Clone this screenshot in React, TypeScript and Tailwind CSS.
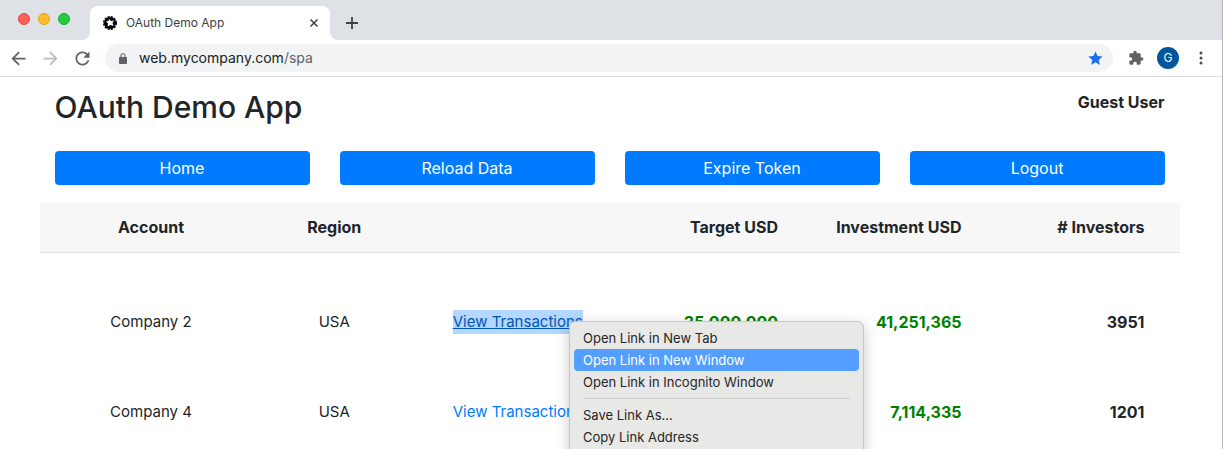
import type { ReactNode } from 'react';

const ARROW_BACK = 'M20 11H7.83l5.59-5.59L12 4l-8 8 8 8 1.41-1.41L7.83 13H20v-2z';
const ARROW_FORWARD = 'M12 4l-1.41 1.41L16.17 11H4v2h12.17l-5.58 5.59L12 20l8-8z';
const RELOAD =
  'M17.65 6.35C16.2 4.9 14.21 4 12 4c-4.42 0-7.99 3.58-7.99 8s3.57 8 7.99 8c3.73 0 6.84-2.55 7.73-6h-2.08c-.82 2.33-3.04 4-5.65 4-3.31 0-6-2.69-6-6s2.69-6 6-6c1.66 0 3.14.69 4.22 1.78L13 11h7V4l-2.35 2.35z';
const STAR = 'M12 17.27L18.18 21l-1.64-7.03L22 9.24l-7.19-.61L12 2 9.19 8.63 2 9.24l5.46 4.73L5.82 21z';
const PUZZLE =
  'M20.5 11H19V7c0-1.1-.9-2-2-2h-4V3.5C13 2.12 11.88 1 10.5 1S8 2.12 8 3.5V5H4c-1.1 0-1.99.9-1.99 2v3.8H3.5c1.49 0 2.7 1.21 2.7 2.7s-1.21 2.7-2.7 2.7H2V20c0 1.1.9 2 2 2h3.8v-1.5c0-1.49 1.21-2.7 2.7-2.7 1.49 0 2.7 1.21 2.7 2.7V22H17c1.1 0 2-.9 2-2v-4h1.5c1.38 0 2.5-1.12 2.5-2.5S21.88 11 20.5 11z';

function Icon({ d, className }: { d: string; className: string }) {
  return (
    <svg viewBox="0 0 24 24" className={className} fill="currentColor" aria-hidden="true">
      <path d={d} />
    </svg>
  );
}

function Favicon() {
  return (
    <svg viewBox="0 0 28 28" className="size-[14px] shrink-0" aria-hidden="true">
      <circle cx="14" cy="14" r="12" fill="#000" />
      <circle cx="14" cy="14" r="12.5" fill="none" stroke="#000" strokeWidth="3" strokeDasharray="4.4 2.15" />
      <path d="M12 6l4 4 6-1-3 5 2 6-6-2-6 3 1-6-4-4 5-1z" fill="#fff" />
    </svg>
  );
}

function TabStrip() {
  return (
    <div className="flex h-10 shrink-0 items-end bg-[#dee1e6] pl-[18px]">
      <div className="flex gap-2 self-center pb-[2px]">
        <button aria-label="Close window" className="size-3 rounded-full border border-[#e2463f] bg-[#ff5f57]" />
        <button aria-label="Minimise window" className="size-3 rounded-full border border-[#e1a116] bg-[#febc2e]" />
        <button aria-label="Zoom window" className="size-3 rounded-full border border-[#12ac28] bg-[#28c840]" />
      </div>
      <div className="ml-3 flex items-end">
        <svg viewBox="0 0 8 8" className="size-2 fill-white" aria-hidden="true">
          <path d="M8 0v8H0a8 8 0 0 0 8-8z" />
        </svg>
        <div className="flex h-[34px] w-60 items-center rounded-t-lg bg-white pr-[11px] pl-[13px]">
          <Favicon />
          <span className="ml-[9px] flex-1 text-xs text-[#3c4043]">OAuth Demo App</span>
          <button aria-label="Close tab">
            <svg viewBox="0 0 10 10" className="size-[10px] stroke-[#3c4043]" strokeWidth="1.5" aria-hidden="true">
              <path d="M1.500 1.500l7 7M8.500 1.500l-7 7" />
            </svg>
          </button>
        </div>
        <svg viewBox="0 0 8 8" className="size-2 fill-white" aria-hidden="true">
          <path d="M0 0v8h8a8 8 0 0 1-8-8z" />
        </svg>
      </div>
      <button aria-label="New tab" className="mb-[11px] ml-2">
        <svg viewBox="0 0 12 12" className="size-3 stroke-[#3c4043]" strokeWidth="1.800" aria-hidden="true">
          <path d="M6 0v12M0 6h12" />
        </svg>
      </button>
    </div>
  );
}

function Toolbar() {
  return (
    <div className="flex h-[37px] shrink-0 items-center border-b border-[#dadce0] bg-white pr-[13px] pl-2 text-[#5f6368]">
      <div className="flex gap-[11px]">
        <button aria-label="Back">
          <Icon d={ARROW_BACK} className="size-[21px]" />
        </button>
        <button aria-label="Forward" className="text-[#babcbe]">
          <Icon d={ARROW_FORWARD} className="size-[21px]" />
        </button>
        <button aria-label="Reload">
          <Icon d={RELOAD} className="size-[21px]" />
        </button>
      </div>
      <div className="ml-3 flex h-7 flex-1 items-center rounded-full bg-[#f1f3f4] pr-[9px] pl-[14px]">
        <svg viewBox="0 0 8 11" className="h-[11px] w-2" aria-hidden="true">
          <rect y="4" width="8" height="7" rx="0.800" fill="currentColor" />
          <path d="M2 4.500V2.700a2 2 0 0 1 4 0v1.800" fill="none" stroke="currentColor" strokeWidth="1.100" />
        </svg>
        <span className="ml-3 flex-1 text-sm text-[#202124]">
          web.mycompany.com<span className="text-[#5f6368]">/spa</span>
        </span>
        <button aria-label="Bookmark this tab" className="text-[#1a6ff0]">
          <Icon d={STAR} className="size-[17px]" />
        </button>
      </div>
      <button aria-label="Extensions" className="ml-[15px]">
        <Icon d={PUZZLE} className="size-4" />
      </button>
      <button
        aria-label="Profile"
        className="ml-[13px] flex size-[22px] items-center justify-center rounded-full bg-[#01579b] text-xs text-white"
      >
        G
      </button>
      <button aria-label="Menu" className="ml-[14px]">
        <svg viewBox="0 0 16 16" className="size-4 fill-[#4b4f54]" aria-hidden="true">
          <circle cx="8" cy="3" r="1.500" />
          <circle cx="8" cy="8" r="1.500" />
          <circle cx="8" cy="13" r="1.500" />
        </svg>
      </button>
    </div>
  );
}

function MenuItem({ active = false, children }: { active?: boolean; children: ReactNode }) {
  return (
    <button
      role="menuitem"
      className={
        active
          ? 'flex h-[22px] items-center rounded bg-[#539eff] px-[9px] text-white'
          : 'flex h-[22px] items-center rounded px-[9px] text-[#262626]'
      }
    >
      {children}
    </button>
  );
}

function ContextMenu() {
  return (
    <div
      role="menu"
      className="absolute top-[44px] left-[143px] z-10 flex w-[295px] flex-col rounded-md border border-[#c6c6c5] bg-[#e8e8e6] px-1 pt-[5px] pb-6 text-left text-[13px] whitespace-nowrap shadow-[0_4px_14px_rgba(0,0,0,0.22)]"
    >
      <MenuItem>Open Link in New Tab</MenuItem>
      <MenuItem active>Open Link in New Window</MenuItem>
      <MenuItem>Open Link in Incognito Window</MenuItem>
      <hr className="mx-[9px] my-[5px] border-[#cdcdcb]" />
      <MenuItem>Save Link As...</MenuItem>
      <MenuItem>Copy Link Address</MenuItem>
    </div>
  );
}

const accounts = [
  { name: 'Company 2', region: 'USA', target: '35,000,000', investment: '41,251,365', investors: 3951, selected: true },
  { name: 'Company 4', region: 'USA', target: '', investment: '7,114,335', investors: 1201, selected: false },
];

export default function App() {
  return (
    <div className="flex h-screen flex-col overflow-hidden border-r border-[#b5b5b8] bg-white font-['Inter',sans-serif]">
      <TabStrip />
      <Toolbar />
      <main className="min-h-0 flex-1 pr-[3px] text-base leading-6 text-[#212529]">
        <div className="mx-auto max-w-[1140px]">
          <header className="flex items-start justify-between px-[15px] pt-[11px]">
            <h1 className="text-3xl leading-[38px] font-medium">OAuth Demo App</h1>
            <span className="mt-[2px] font-bold">Guest User</span>
          </header>
          <nav className="mt-[25px] grid grid-cols-4 gap-[30px] px-[15px]">
            {['Home', 'Reload Data', 'Expire Token', 'Logout'].map((label) => (
              <button key={label} className="h-[34px] rounded bg-[#007bff] text-white">
                {label}
              </button>
            ))}
          </nav>
          <table className="mt-[18px] w-full table-fixed">
            <colgroup>
              <col className="w-[203px]" />
              <col span={4} />
              <col className="w-[203px]" />
            </colgroup>
            <thead>
              <tr className="h-[49px] border-b border-[#dfdfdf] bg-[#f7f7f7]">
                <th className="pl-5 text-center">Account</th>
                <th className="text-center">Region</th>
                <td />
                <th className="pr-[15px] text-right">Target USD</th>
                <th className="pr-[15px] text-right">Investment USD</th>
                <th className="pr-[35px] text-right"># Investors</th>
              </tr>
            </thead>
            <tbody>
              <tr className="h-[25px]">
                <td colSpan={6} />
              </tr>
              {accounts.map((a) => (
                <tr key={a.name} className="h-[90px]">
                  <td className="pl-5 text-center text-[15px] leading-6">{a.name}</td>
                  <td className="text-center text-[15px] leading-6">{a.region}</td>
                  <td className="relative text-center text-[15px] leading-6 whitespace-nowrap">
                    <a
                      href="#transactions"
                      className={
                        a.selected
                          ? 'inline-block bg-[#b3d7fe] text-[#0056b3] underline'
                          : 'inline-block text-[#007bff]'
                      }
                    >
                      View Transactions
                    </a>
                    {a.selected && <ContextMenu />}
                  </td>
                  <td className="pr-[15px] text-right font-bold text-[#008000]">{a.target}</td>
                  <td className="pr-[15px] text-right font-bold text-[#008000]">{a.investment}</td>
                  <td className="pr-[35px] text-right font-bold">{a.investors}</td>
                </tr>
              ))}
            </tbody>
          </table>
        </div>
      </main>
    </div>
  );
}
